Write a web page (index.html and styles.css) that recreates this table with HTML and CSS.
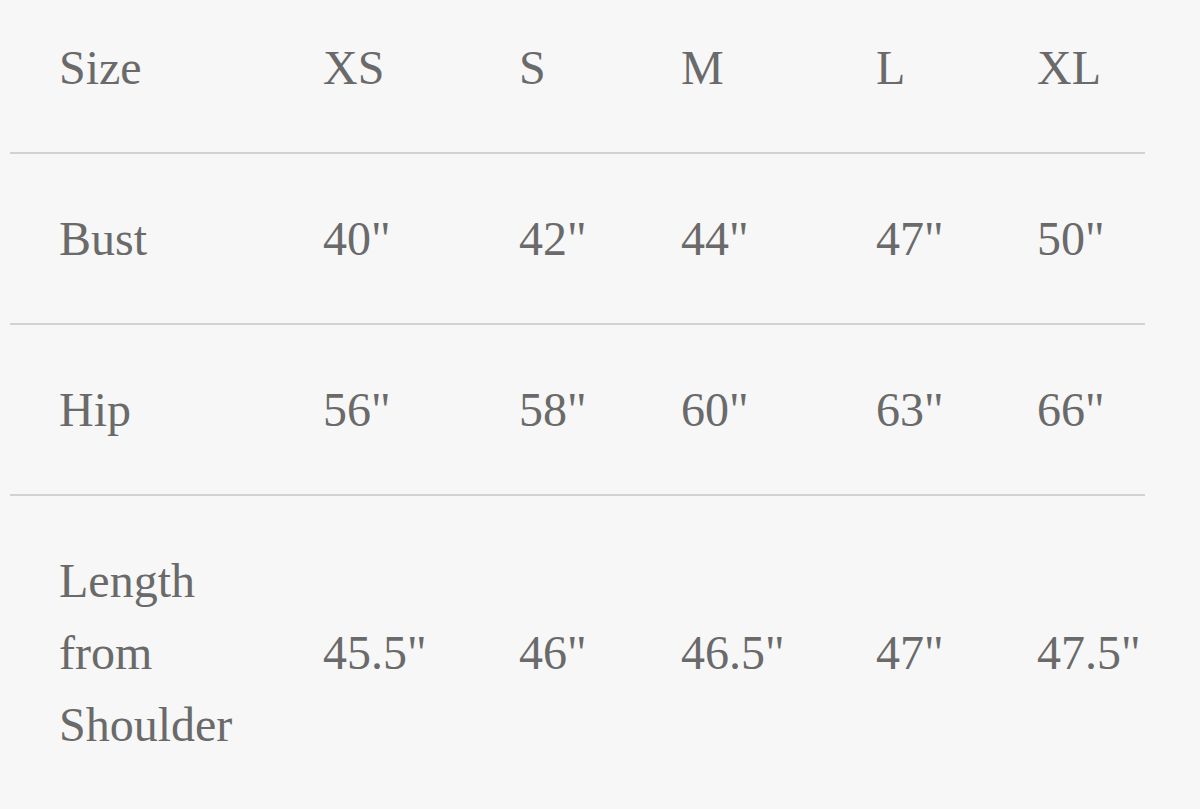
FILE: index.html
```html
<!DOCTYPE html>
<html lang="en">
<head>
<meta charset="utf-8">
<title>Size chart</title>
<link rel="stylesheet" href="styles.css">
</head>
<body>
<div class="page">
  <table class="chart">
    <colgroup>
      <col class="c1"><col class="c2"><col class="c3"><col class="c4"><col class="c5"><col class="c6">
    </colgroup>
    <thead>
      <tr><th>Size</th><th>XS</th><th>S</th><th>M</th><th>L</th><th>XL</th></tr>
    </thead>
    <tbody>
      <tr><td>Bust</td><td>40"</td><td>42"</td><td>44"</td><td>47"</td><td>50"</td></tr>
      <tr><td>Hip</td><td>56"</td><td>58"</td><td>60"</td><td>63"</td><td>66"</td></tr>
      <tr><td>Length from Shoulder</td><td>45.5"</td><td>46"</td><td>46.5"</td><td>47"</td><td>47.5"</td></tr>
    </tbody>
  </table>
</div>
</body>
</html>
```

FILE: styles.css
```css
html, body {
  margin: 0;
  padding: 0;
  background: #f7f7f7;
}
.page {
  padding-left: 10px;
  width: 1135px;
}
.chart {
  width: 1135px;
  border-collapse: collapse;
  table-layout: fixed;
  font-family: "Liberation Serif", "Times New Roman", serif;
  font-size: 48px;
  line-height: 72px;
  color: #6a6a6a;
}
.c1 { width: 264px; }
.c2 { width: 196px; }
.c3 { width: 162px; }
.c4 { width: 195px; }
.c5 { width: 161px; }
.c6 { width: 157px; }
.chart th,
.chart td {
  text-align: left;
  font-weight: normal;
  vertical-align: middle;
  padding: 49px 0 48px 49px;
  border-bottom: 2px solid #d2d2d2;
}
.chart th {
  padding-top: 32px;
}
.chart tbody tr:last-child td {
  border-bottom: none;
}
.chart td:first-child {
  padding-right: 20px;
}
```
